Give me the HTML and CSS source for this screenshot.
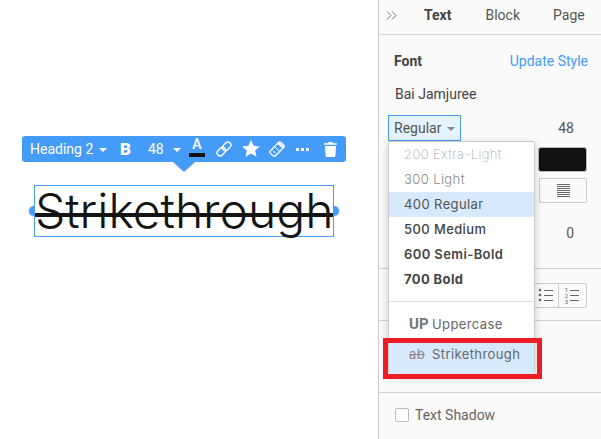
FILE: index.html
```html
<!DOCTYPE html>
<html lang="en">
<head>
<meta charset="utf-8">
<title>Text editor</title>
<link rel="stylesheet" href="styles.css">
</head>
<body>
<div class="app">
  <main class="canvas">
    <div class="toolbar">
      <span class="tool-label">Heading 2</span><span class="caret caret-white c1"></span>
      <b class="tool-b">B</b>
      <span class="tool-size">48</span><span class="caret caret-white c2"></span>
      <span class="tool-color">A</span>
      <svg class="ti t-link" width="16" height="16" viewBox="0 0 16 16" fill="none" stroke="#fff" stroke-width="1.400"><g transform="rotate(-45 8 8)"><rect x="-.5" y="5" width="9.500" height="6" rx="3"/><rect x="7" y="5" width="9.500" height="6" rx="3"/></g></svg>
      <svg class="ti t-star" width="18" height="17" viewBox="0 0 18 17" fill="#fff"><path d="M9 0l2.600 5.700 6.200.7-4.600 4.200 1.300 6.100L9 13.600l-5.500 3.100 1.300-6.100L.2 6.400l6.200-.7z"/></svg>
      <svg class="ti t-erase" width="16" height="16" viewBox="0 0 16 16" fill="none" stroke="#fff" stroke-width="1.300"><path d="M1.500 9.800L9.500 1.400a1.600 1.600 0 0 1 2.200 0l3 2.600a1.600 1.600 0 0 1 0 2.200L6.300 15H4.800a2 2 0 0 1-1.400-.6L1.500 12.300a1.500 1.500 0 0 1 0-2.500z"/><path d="M9 1.900l5.700 5" stroke-width="2.500"/><path d="M6 6l4.500 4.200M3.800 9.500l3 3" stroke-width="1"/></svg>
      <span class="t-more"><i></i><i></i><i></i></span>
      <svg class="ti t-trash" width="13" height="15" viewBox="0 0 13 15" fill="#fff"><path d="M4.500 0h4l.6 1.200H13v1.600H0V1.200h3.900zM1 4h11l-.6 10a1 1 0 0 1-1 1H2.600a1 1 0 0 1-1-1z"/></svg>
      <span class="arrow"></span>
    </div>
    <div class="selection">
      <span class="handle hl"></span>
      <h2 class="heading">Strikethrough</h2>
      <span class="handle hr"></span>
    </div>
  </main>
  <aside class="panel">
    <nav class="tabs">
      <svg class="chev" width="11" height="9" viewBox="0 0 11 9" fill="none" stroke="#777" stroke-width="1"><path d="M1 .5l4 4-4 4M6 .5l4 4-4 4"/></svg>
      <span class="tab tab-on">Text</span>
      <span class="tab">Block</span>
      <span class="tab">Page</span>
    </nav>
    <section class="sec sec1">
      <div class="row-font"><b>Font</b><a>Update Style</a></div>
      <div class="family">Bai Jamjuree</div>
      <div class="row-style">
        <span class="select">Regular<span class="caret caret-grey"></span></span>
        <span class="num">48</span>
      </div>
      <div class="row-swatch"><span class="swatch"></span></div>
      <div class="row-align">
        <span class="align">
          <span class="cell cell-empty"></span>
          <span class="cell"><svg width="15" height="15" viewBox="0 0 15 15" stroke="#666" stroke-width="1"><path d="M1 1.500h13M1 3.500h13M1 5.500h13M1 7.500h13M1 9.500h13M1 11.500h13M1 13.500h13"/></svg></span>
        </span>
      </div>
      <div class="row-zero"><span class="num">0</span></div>
    </section>
    <section class="sec sec2">
      <span class="lists">
        <span class="cell lc"><svg width="17" height="15" viewBox="0 0 17 15" stroke="#666" stroke-width="1" fill="#666"><circle cx="2" cy="2" r="1.300" stroke="none"/><circle cx="2" cy="7" r="1.300" stroke="none"/><circle cx="2" cy="12" r="1.300" stroke="none"/><path d="M6 2.500h9M6 7.500h9M6 12.500h9"/></svg></span>
        <span class="cell lc"><span class="ol"><i>1</i><i>2</i><i>3</i></span><svg width="10" height="15" viewBox="0 0 10 15" stroke="#666" stroke-width="1"><path d="M0 2.500h9M0 7.500h9M0 12.500h9"/></svg></span>
      </span>
    </section>
    <section class="sec sec3"></section>
    <label class="shadow"><span class="check"></span>Text Shadow</label>
    <div class="menu">
      <div class="mi w200">200 Extra-Light</div>
      <div class="mi w300">300 Light</div>
      <div class="mi w400 on">400 Regular</div>
      <div class="mi w500">500 Medium</div>
      <div class="mi w600">600 Semi-Bold</div>
      <div class="mi w700">700 Bold</div>
      <div class="sep"></div>
      <div class="mi opt"><b class="up">UP</b>Uppercase</div>
      <div class="mi opt strike on"><s class="ab">ab</s>Strikethrough</div>
    </div>
    <div class="redbox"></div>
  </aside>
</div>
</body>
</html>
```

FILE: styles.css
```css
* { box-sizing: border-box; }
html, body { margin: 0; height: 100%; }
body { font-family: Roboto, "Liberation Sans", sans-serif; background: #fff; overflow: hidden; }
.app { display: flex; width: 601px; height: 439px; }

.canvas { position: relative; isolation: isolate; width: 378px; flex: none; background: #fff; }
.toolbar { position: absolute; left: 22px; top: 136px; width: 324px; height: 26px; background: #459bf8; border-radius: 3px; color: #fff; font-size: 14px; line-height: 26px; }
.toolbar > * { position: absolute; }
.tool-label { left: 8px; top: 0; }
.caret { display: inline-block; width: 0; height: 0; border-left: 4px solid transparent; border-right: 4px solid transparent; }
.caret-white { border-top: 4px solid #fff; }
.c1 { left: 77px; top: 12px; }
.c2 { left: 151px; top: 12px; }
.tool-b { left: 98px; top: 0; font-size: 17px; font-weight: 900; }
.tool-size { left: 126px; top: 0; }
.tool-color { left: 167px; top: 0; width: 16px; height: 21px; line-height: 17px; text-align: center; font-size: 14px; font-weight: 500; border-bottom: 4px solid #111; }
.t-link { left: 194px; top: 5px; }
.t-star { left: 220px; top: 4px; }
.t-erase { left: 247px; top: 5px; }
.t-more { left: 274px; top: 12px; display: flex; gap: 2px; }
.t-more i { width: 3px; height: 3px; background: #fff; }
.t-trash { left: 302px; top: 6px; }
.arrow { left: 151px; top: 26px; width: 0; height: 0; border-left: 11px solid transparent; border-right: 11px solid transparent; border-top: 10px solid #459bf8; }

.selection { position: absolute; left: 34px; top: 185px; width: 300px; height: 52px; border: 1px solid #459bf8; background: #fff; }
.heading { position: relative; margin: 0; font-family: Inter, sans-serif; font-weight: 300; font-size: 48px; line-height: 50px; color: #141414; white-space: nowrap; letter-spacing: -.02px; }
.heading::after { content: ""; position: absolute; left: 0; right: 0; top: 27px; height: 4px; background: #141414; }
.handle { position: absolute; top: 19px; width: 12px; height: 12px; background: #459bf8; border: 1px solid #e8f0fa; border-radius: 50%; z-index: -1; }
.hl { left: -7px; }
.hr { right: -7px; }

.panel { position: relative; flex: 1; background: #fafafa; border-left: 1px solid #ccc; color: #444; font-size: 14px; }
.tabs { height: 35px; display: flex; align-items: center; border-bottom: 1px solid #d2d2d2; padding-left: 7px; }
.chev { flex: none; margin-top: -3px; }
.tab { color: #555; margin-top: -4px; }
.tab-on { font-weight: 700; margin-left: 27px; color: #444; }
.tab:nth-of-type(2) { margin-left: 34px; }
.tab:nth-of-type(3) { margin-left: 33px; }
.sec { border-bottom: 1px solid #d2d2d2; }
.sec1 { height: 234px; padding: 0 13px 0 15px; }
.row-font { display: flex; justify-content: space-between; padding-top: 17px; line-height: 18px; }
.row-font b { font-weight: 700; font-size: 14px; }
.row-font a { color: #459bf8; }
.family { margin-top: 15px; line-height: 18px; padding-left: 1px; }
.row-style { display: flex; justify-content: space-between; margin: 12px 14px 0 -6px; height: 26px; align-items: center; }
.select { height: 26px; width: 73px; background: #e5f2ff; border: 1px solid #459bf8; padding-left: 5px; line-height: 24px; color: #555; }
.caret-grey { border-top: 4px solid #888; margin-left: 6px; vertical-align: middle; }
.num { color: #555; }
.row-swatch { display: flex; justify-content: flex-end; margin: 6px 1px 0 0; }
.swatch { width: 49px; height: 25px; background: #111; border: 1px solid #bbb; border-radius: 3px; }
.row-align { display: flex; justify-content: flex-end; margin: 6px 1px 0 0; }
.align { display: flex; width: 48px; height: 25px; border: 1px solid #ccc; border-radius: 0 2px 2px 0; border-left: 0; }
.cell { display: flex; align-items: center; justify-content: center; }
.cell-empty { width: 1px; border-right: 1px solid #ccc; }
.align .cell:last-child { flex: 1; }
.row-zero { display: flex; justify-content: flex-end; padding-right: 14px; margin-top: 21px; line-height: 18px; }
.sec2 { height: 52px; padding-top: 14px; }
.lists { display: flex; width: 53px; height: 25px; margin-left: 155px; border: 1px solid #ccc; border-left: 0; border-radius: 0 2px 2px 0; }
.lc { width: 24px; }
.lc:last-child { flex: 1; gap: 2px; border-left: 1px solid #ccc; }
.ol { display: flex; flex-direction: column; font-size: 6px; line-height: 6px; color: #666; }
.ol i { font-style: normal; }
.sec3 { height: 72px; }
.shadow { display: flex; align-items: center; gap: 6px; margin: 13px 0 0 16px; line-height: 18px; color: #666; }
.check { width: 14px; height: 14px; background: #fff; border: 1px solid #bbb; border-radius: 2px; }

.menu { position: absolute; left: 9px; top: 141px; width: 147px; height: 233px; background: #fff; border: 1px solid #ccc; border-radius: 2px; box-shadow: 0 3px 8px rgba(0,0,0,.2); font-family: Inter, sans-serif; font-size: 13px; letter-spacing: .4px; color: #555; }
.mi { height: 25px; line-height: 25px; padding-left: 15px; white-space: nowrap; }
.w200 { color: #aaa; font-weight: 200; }
.w300 { color: #888; font-weight: 300; }
.w500 { font-weight: 500; color: #444; }
.w600 { font-weight: 600; color: #444; }
.w700 { font-weight: 700; color: #444; }
.on { background: #d7e9fc; }
.sep { height: 1px; background: #ddd; margin-top: 9px; }
.opt { padding-left: 20px; color: #666; }
.sep + .opt { margin-top: 10px; }
.up { display: inline-block; width: 23px; font-weight: 700; font-size: 15px; font-family: Roboto, sans-serif; letter-spacing: 0; color: #777; }
.strike { height: 31px; margin-top: 6px; line-height: 23px; }
.ab { display: inline-block; width: 23px; color: #888; }
.redbox { position: absolute; left: 4px; top: 338px; width: 159px; height: 41px; border: 5px solid #ee1c25; }
```
